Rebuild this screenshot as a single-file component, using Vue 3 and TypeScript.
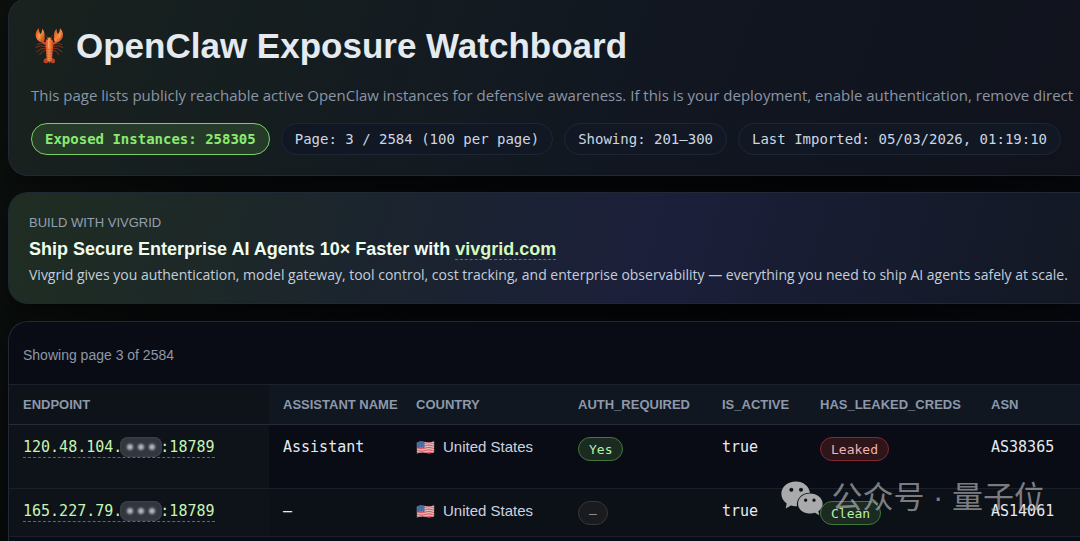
<script setup lang="ts">
interface Instance {
  host: string
  port: string
  assistant: string
  country: string
  auth: string
  active: string
  creds: string
  asn: string
  tall?: boolean
}

const exposed = 258305
const page = 3
const pages = 2584

const stats: string[] = [
  `Page: ${page} / ${pages} (100 per page)`,
  'Showing: 201–300',
  'Last Imported: 05/03/2026, 01:19:10',
]

const columns: string[] = [
  'ENDPOINT',
  'ASSISTANT NAME',
  'COUNTRY',
  'AUTH_REQUIRED',
  'IS_ACTIVE',
  'HAS_LEAKED_CREDS',
  'ASN',
]

const instances: Instance[] = [
  { host: '120.48.104.', port: ':18789', assistant: 'Assistant', country: 'United States', auth: 'Yes', active: 'true', creds: 'Leaked', asn: 'AS38365', tall: true },
  { host: '165.227.79.', port: ':18789', assistant: '–', country: 'United States', auth: '–', active: 'true', creds: 'Clean', asn: 'AS14061' },
]

const tones: Record<string, string> = { Yes: 'good', Clean: 'good', Leaked: 'bad' }
const tone = (value: string): string => tones[value] ?? 'muted'
</script>

<template>
  <main class="page">
    <header class="card hero">
      <h1>
        <svg class="lobster" viewBox="32 19 87 109" aria-hidden="true">
          <defs>
            <linearGradient id="shell" x1="0" x2="1" y1="0" y2="0">
              <stop offset="0" stop-color="#c9431f" />
              <stop offset="0.45" stop-color="#f79250" />
              <stop offset="1" stop-color="#c9431f" />
            </linearGradient>
            <linearGradient id="claw" x1="0" x2="1" y1="0" y2="1">
              <stop offset="0" stop-color="#d8481f" />
              <stop offset="0.5" stop-color="#f28a3c" />
              <stop offset="1" stop-color="#b5351a" />
            </linearGradient>
          </defs>
          <g fill="none" stroke="#a93a20" stroke-width="2.2" stroke-linecap="round" stroke-linejoin="round">
            <path d="M66 70L50 65L38 69M66 75L47 73L34 78M66 80L50 82L37 91M67 85L54 90L46 100" />
            <path d="M84 70L100 65L112 69M84 75L103 73L116 78M84 80L100 82L113 91M83 85L96 90L104 100" />
            <path d="M72 52L67 43L60 44M78 52L83 43L90 44" stroke-width="1.4" />
          </g>
          <g fill="none" stroke="#d3512a" stroke-width="6" stroke-linecap="round">
            <path d="M50 57L58 64L67 66M100 57L92 64L83 66" />
          </g>
          <path fill="url(#claw)" d="M43 20C36 25 31 38 35 48C39 59 49 64 56 62C62 59 62 51 60 45C62 38 60 27 53 21C53 28 52 33 49 37C45 33 43 27 43 20Z" />
          <path fill="url(#claw)" d="M107 20C114 25 119 38 115 48C111 59 101 64 94 62C88 59 88 51 90 45C88 38 90 27 97 21C97 28 98 33 101 37C105 33 107 27 107 20Z" />
          <path fill="#c43e20" d="M68 111C60 109 56 116 58 123C62 128 69 126 73 121L75 127L78 121C82 126 88 128 92 123C94 116 90 109 82 111Z" />
          <path fill="url(#shell)" d="M75 47C66 49 61 61 63 72C63 78 65 84 65 92L67 116Q75 124 83 116L85 92C85 84 87 78 87 72C89 61 84 49 75 47Z" />
          <path fill="none" stroke="#bd4a27" stroke-width="1.4" d="M65 82Q75 88 85 82M66 90Q75 96 84 90M67 98Q75 104 83 98M68 106Q75 111 82 106M69 113Q75 118 81 113" />
          <path fill="none" stroke="#ffb15c" stroke-width="2.4" stroke-linecap="round" d="M73 54L73 77M42 37L46 49M108 37L104 49" />
          <circle cx="69" cy="54" r="1.5" fill="#321513" />
          <circle cx="81" cy="54" r="1.5" fill="#321513" />
        </svg>
        OpenClaw Exposure Watchboard
      </h1>
      <p class="lead">
        This page lists publicly reachable active OpenClaw instances for defensive awareness. If this is your deployment, enable authentication, remove direct
      </p>
      <ul class="stats">
        <li class="chip chip-hot">Exposed Instances: {{ exposed }}</li>
        <li v-for="stat in stats" :key="stat" class="chip">{{ stat }}</li>
      </ul>
    </header>

    <section class="card promo">
      <p class="eyebrow">BUILD WITH VIVGRID</p>
      <h2>Ship Secure Enterprise AI Agents 10× Faster with <a href="#vivgrid">vivgrid.com</a></h2>
      <p class="pitch">
        Vivgrid gives you authentication, model gateway, tool control, cost tracking, and enterprise observability — everything you need to ship AI agents safely at scale.
      </p>
    </section>

    <section class="card listing">
      <p class="paging">Showing page {{ page }} of {{ pages }}</p>
      <table>
        <colgroup>
          <col class="c-endpoint" />
          <col class="c-name" />
          <col class="c-country" />
          <col class="c-auth" />
          <col class="c-active" />
          <col class="c-creds" />
          <col />
        </colgroup>
        <thead>
          <tr>
            <th v-for="column in columns" :key="column" scope="col">{{ column }}</th>
          </tr>
        </thead>
        <tbody>
          <tr v-for="item in instances" :key="item.host" :class="{ tall: item.tall }">
            <td>
              <a class="endpoint" href="#endpoint">{{ item.host }}<span class="mask"><i></i><i></i><i></i></span>{{ item.port }}</a>
            </td>
            <td class="mono">{{ item.assistant }}</td>
            <td>
              <span class="country">
                <svg class="flag" viewBox="0 0 54 38" aria-hidden="true">
                  <clipPath :id="'wave' + item.asn">
                    <path d="M1 5C10 0 18 1 27 3C36 5 44 4 53 1V33C44 37 36 37 27 35C18 33 10 33 1 37Z" />
                  </clipPath>
                  <g :clip-path="`url(#wave${item.asn})`">
                    <path fill="#e9e3e6" d="M0 0H54V38H0Z" />
                    <path fill="none" stroke="#d2474e" stroke-width="2.8" d="M0 5C10 0 18 1 27 3S44 4 54 1M0 10C10 5 18 6 27 8S44 9 54 6M0 15C10 10 18 11 27 13S44 14 54 11M0 20C10 15 18 16 27 18S44 19 54 16M0 25C10 20 18 21 27 23S44 24 54 21M0 30C10 25 18 26 27 28S44 29 54 26M0 35C10 30 18 31 27 33S44 34 54 31" />
                    <path fill="#3c669f" d="M0 0H24V21C16 19 9 19 0 22Z" />
                    <path fill="none" stroke="#a9bfdc" stroke-width="1.3" stroke-dasharray="1.5 3" d="M3 8C10 5 17 5 23 6M4 12C10 9 17 9 23 10M3 16C10 13 17 13 23 14M4 20C10 17 17 17 23 18" />
                  </g>
                </svg>
                {{ item.country }}
              </span>
            </td>
            <td><span class="tag" :class="tone(item.auth)">{{ item.auth }}</span></td>
            <td class="mono">{{ item.active }}</td>
            <td><span class="tag" :class="tone(item.creds)">{{ item.creds }}</span></td>
            <td class="mono">{{ item.asn }}</td>
          </tr>
        </tbody>
      </table>
    </section>

    <div class="watermark">
      <svg viewBox="0 0 126 104" aria-hidden="true">
        <path fill="#a9aaac" fill-rule="evenodd" d="M45 1C20 1 1 17 1 38C1 50 7 60 17 67L14 82L30 73Q38 76 48 75C45 54 62 35 87 35C84 15 67 1 45 1ZM31 20A6 6 0 1 1 31 32A6 6 0 1 1 31 20ZM60 20A6 6 0 1 1 60 32A6 6 0 1 1 60 20Z" />
        <path fill="#a9aaac" fill-rule="evenodd" d="M87 37C66 37 51 50 51 68C51 85 67 97 87 97Q95 97 102 95L115 102L112 90C120 84 125 77 125 68C125 50 108 37 87 37ZM74 52A5 5 0 1 1 74 62A5 5 0 1 1 74 52ZM99 52A5 5 0 1 1 99 62A5 5 0 1 1 99 52Z" />
      </svg>
      <span>公众号 · 量子位</span>
    </div>
  </main>
</template>

<style>
html,
body {
  background: #050608;
  overflow: hidden;
}
</style>

<style scoped>
* {
  box-sizing: border-box;
}

.page {
  position: relative;
  height: 100vh;
  overflow: hidden;
  padding-left: 8px;
  background: linear-gradient(115deg, #0c110d 0%, #06080a 30%, #050608 70%, #070a11 100%);
  color: #e2e8f0;
  font-family: "Liberation Sans", Arial, sans-serif;
  font-size: 15px;
  line-height: 20px;
}

h1,
h2,
p,
ul {
  margin: 0;
}

.card {
  border: 1px solid #222936;
  border-right: 0;
  border-radius: 20px 0 0 20px;
  box-shadow: 0 8px 24px rgba(0, 0, 0, 0.4);
}

.hero {
  margin-top: -2px;
  padding: 23px 0 20px 22px;
  background: linear-gradient(110deg, #19221e 0%, #141c20 32%, #111621 62%, #10131c 100%);
}

h1 {
  display: flex;
  align-items: center;
  gap: 12px;
  padding-left: 4px;
  color: #e4eaef;
  font-size: 35px;
  line-height: 48px;
  white-space: nowrap;
}

.lobster {
  flex: none;
  width: 29px;
  height: 36px;
}

.lead {
  margin-top: 13px;
  color: #8b95a5;
  font-family: "Open Sans", "Liberation Sans", sans-serif;
  font-size: 15px;
  line-height: 24px;
  white-space: nowrap;
}

.stats {
  display: flex;
  gap: 11px;
  margin-top: 16px;
  padding: 0;
  list-style: none;
}

.chip {
  padding: 5px 13px;
  border: 1px solid #1e2636;
  border-radius: 16px;
  background: #111823;
  color: #ced6e2;
  font-family: Menlo, "DejaVu Sans Mono", monospace;
  font-size: 14px;
  line-height: 20px;
  white-space: nowrap;
}

.chip-hot {
  border-color: #79cf62;
  background: #263a29;
  color: #8beb70;
  font-weight: bold;
}

.promo {
  margin-top: 16px;
  padding: 20px 0 18px 20px;
  background: linear-gradient(105deg, #1f2d22 0%, #1d2828 20%, #1b2430 38%, #1c1f3a 60%, #171c30 78%, #131824 100%);
}

.eyebrow {
  color: #94a0b0;
  font-size: 13px;
}

h2 {
  margin-top: 4px;
  color: #effdf0;
  font-size: 18px;
  line-height: 24px;
  white-space: nowrap;
}

h2 a {
  border-bottom: 1px dashed #62755f;
  color: #d5f9be;
  text-decoration: none;
}

.pitch {
  margin-top: 4px;
  color: #c4cedc;
  font-family: "Open Sans", "Liberation Sans", sans-serif;
  font-size: 14px;
  white-space: nowrap;
}

.listing {
  margin-top: 17px;
  padding-bottom: 24px;
  overflow: hidden;
  background: #090c14;
}

.paging {
  padding: 23px 14px 19px;
  color: #8e98a8;
  font-size: 14px;
}

table {
  width: 100%;
  border-collapse: separate;
  border-spacing: 0;
  table-layout: fixed;
}

.c-endpoint {
  width: 260px;
}

.c-name {
  width: 133px;
}

.c-country {
  width: 162px;
}

.c-auth {
  width: 144px;
}

.c-active {
  width: 98px;
}

.c-creds {
  width: 171px;
}

th {
  padding: 10px 14px 9px;
  border-top: 1px solid #1b222d;
  border-bottom: 1px solid #242c39;
  background: #101721;
  color: #8d98aa;
  font-size: 13px;
  text-align: left;
  white-space: nowrap;
}

td {
  height: 48px;
  padding: 12px 14px 11px;
  border-bottom: 1px solid #1a1f2b;
  color: #cbd3e0;
  vertical-align: top;
  white-space: nowrap;
}

.tall td {
  height: 64px;
}

tbody tr:nth-child(even) td {
  background: #0c1017;
}

th:first-child,
tbody tr td:first-child {
  background: #0e131a;
}

.mono,
.endpoint {
  font-family: Menlo, "DejaVu Sans Mono", monospace;
  font-size: 15px;
}

.mono {
  color: #e6eaf1;
}

.endpoint {
  display: inline-flex;
  align-items: center;
  height: 21px;
  border-bottom: 1px dashed #58714f;
  color: #c8f3b3;
  text-decoration: none;
}

.mask {
  display: inline-flex;
  align-items: center;
  justify-content: center;
  gap: 5px;
  width: 42px;
  height: 20px;
  margin: 0 -2px;
  border-radius: 8px;
  background: #31363f;
  box-shadow: inset 0 0 2px #535962;
}

.mask i {
  width: 6px;
  height: 6px;
  border-radius: 50%;
  background: #b4b8bf;
  filter: blur(1px);
}

.country {
  display: flex;
  align-items: center;
  gap: 8px;
}

.flag {
  width: 19px;
  height: 13px;
}

.tag {
  display: block;
  width: fit-content;
  padding: 2px 10px 1px;
  border: 1px solid;
  border-radius: 12px;
  font-family: Menlo, "DejaVu Sans Mono", monospace;
  font-size: 13px;
  line-height: 19px;
}

.good {
  border-color: #41783a;
  background: #1c2b21;
  color: #b9efa8;
}

.bad {
  border-color: #86282d;
  background: #2e151a;
  color: #efb4b4;
}

.muted {
  border-color: #35373b;
  background: #191b1f;
  color: #92969d;
}

.watermark {
  position: absolute;
  right: 35px;
  bottom: 21px;
  display: flex;
  align-items: center;
  gap: 8px;
  color: rgba(190, 190, 192, 0.65);
  font-family: "Liberation Sans", "Noto Sans CJK SC", sans-serif;
  font-size: 31px;
  line-height: 44px;
  pointer-events: none;
  white-space: nowrap;
}

.watermark svg {
  width: 42px;
  height: 35px;
}
</style>
